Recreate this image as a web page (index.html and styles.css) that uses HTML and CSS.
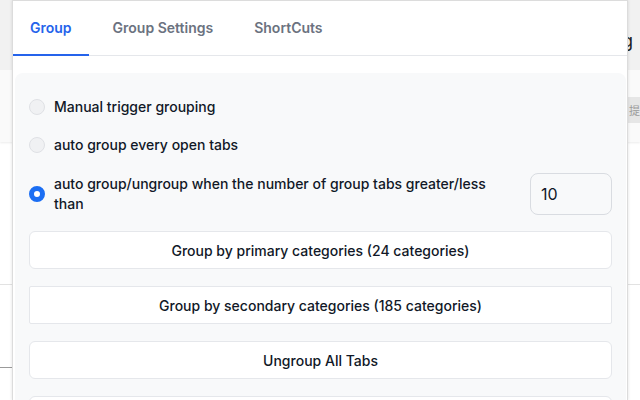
FILE: index.html
```html
<!DOCTYPE html>
<html>
<head>
<meta charset="utf-8">
<link rel="stylesheet" href="styles.css">
</head>
<body>
<div class="page">
  <div class="page-head">
    <div class="head-top"><span class="head-title">Tab Grouping</span></div>
    <div class="head-bar"><span class="head-btn">提</span></div>
  </div>
  <div class="page-sec"></div>
  <div class="page-sec2"></div>
</div>

<div class="popup">
  <div class="tabs">
    <div class="tab active">Group</div>
    <div class="tab">Group Settings</div>
    <div class="tab">ShortCuts</div>
  </div>
  <div class="panel">
    <label class="radio-row">
      <span class="radio"></span>
      <span class="label">Manual trigger grouping</span>
    </label>
    <label class="radio-row">
      <span class="radio"></span>
      <span class="label">auto group every open tabs</span>
    </label>
    <div class="radio-row wide">
      <span class="radio checked"></span>
      <span class="label long">auto group/ungroup when the number of group tabs greater/less than</span>
      <span class="num-input">10</span>
    </div>
    <div class="btn">Group by primary categories (24 categories)</div>
    <div class="btn square">Group by secondary categories (185 categories)</div>
    <div class="btn">Ungroup All Tabs</div>
    <div class="btn"></div>
  </div>
</div>
</body>
</html>
```
FILE: styles.css
```css
* { box-sizing: border-box; }
html, body { margin: 0; padding: 0; }
body {
  width: 640px;
  height: 400px;
  overflow: hidden;
  background: #ffffff;
  font-family: Inter, "Noto Sans", "Liberation Sans", "Noto Sans CJK SC", sans-serif;
  position: relative;
}

/* background page */
.page { width: 640px; height: 400px; overflow: hidden; }
.page-head {
  height: 142px;
  border-bottom: 1px solid #d6d6d6;
  box-shadow: 0 1px 2px rgba(0,0,0,0.08);
  background: #f7f7f7;
}
.head-top {
  height: 70px;
  background: #f1f1f1;
  display: flex;
  justify-content: flex-end;
  align-items: center;
}
.head-title {
  font-size: 18px;
  color: #222;
  margin-right: 7px;
  margin-top: 10px;
  white-space: nowrap;
}
.head-bar {
  height: 72px;
  background: #fafafa;
  display: flex;
  justify-content: flex-end;
  align-items: flex-start;
  padding-top: 27px;
}
.head-btn {
  display: block;
  height: 26px;
  line-height: 26px;
  padding: 0 0 0 1px;
  width: 12px;
  font-size: 11px;
  color: #9a9a9a;
  background: #e6e6e6;
  white-space: nowrap;
  font-family: "Noto Sans CJK SC", sans-serif;
}
.page-sec {
  height: 143px;
  border-bottom: 1px solid #e2e2e2;
}
.page-sec2 {
  height: 83px;
  border-bottom: 1px solid #9a9a9a;
  width: 14px;
}

/* popup */
.popup {
  position: absolute;
  left: 12px;
  top: 0;
  width: 616px;
  height: 400px;
  overflow: hidden;
  background: #ffffff;
  border: 1px solid #dcdcdc;
  border-bottom: none;
  box-shadow: 0 0 3px rgba(0,0,0,0.12);
}
.tabs {
  display: flex;
  gap: 7px;
  height: 55px;
  border-bottom: 1px solid #e5e7eb;
}
.tab {
  padding: 0 17px;
  height: 55px;
  line-height: 54px;
  font-size: 14px;
  font-weight: 600;
  color: #6b7280;
  border-bottom: 2px solid transparent;
  margin-bottom: -1px;
}
.tab.active {
  color: #2563eb;
  border-bottom-color: #2563eb;
}
.panel {
  margin: 17px 1px 0 2px;
  background: #f8f9fa;
  border-radius: 8px 8px 0 0;
  padding: 24px 14px 0 14px;
  height: 340px;
}
.radio-row {
  display: flex;
  align-items: center;
  gap: 9px;
  margin-bottom: 18px;
  font-size: 14px;
  line-height: 20px;
  font-weight: 500;
  color: #111827;
}
.radio-row.wide { margin-bottom: 16px; }
.radio {
  flex: none;
  width: 16px;
  height: 16px;
  border-radius: 50%;
  background: #f0f1f3;
  border: 1px solid #dfe1e5;
}
.radio.checked {
  background: #ffffff;
  border: 5px solid #1b6ef3;
}
.label.long {
  flex: 1;
  padding-right: 22px;
}
.num-input {
  flex: none;
  width: 82px;
  height: 42px;
  border: 1px solid #d9dce1;
  border-radius: 8px;
  padding: 0 10px;
  font-size: 16px;
  font-weight: 400;
  line-height: 40px;
  color: #111827;
  background: #f8f9fa;
}
.btn {
  height: 38px;
  margin-bottom: 17px;
  background: #ffffff;
  border: 1px solid #e5e7eb;
  border-radius: 6px;
  display: flex;
  align-items: center;
  justify-content: center;
  font-size: 14px;
  font-weight: 500;
  color: #111827;
}
.btn.square { border-radius: 2px; }
```
